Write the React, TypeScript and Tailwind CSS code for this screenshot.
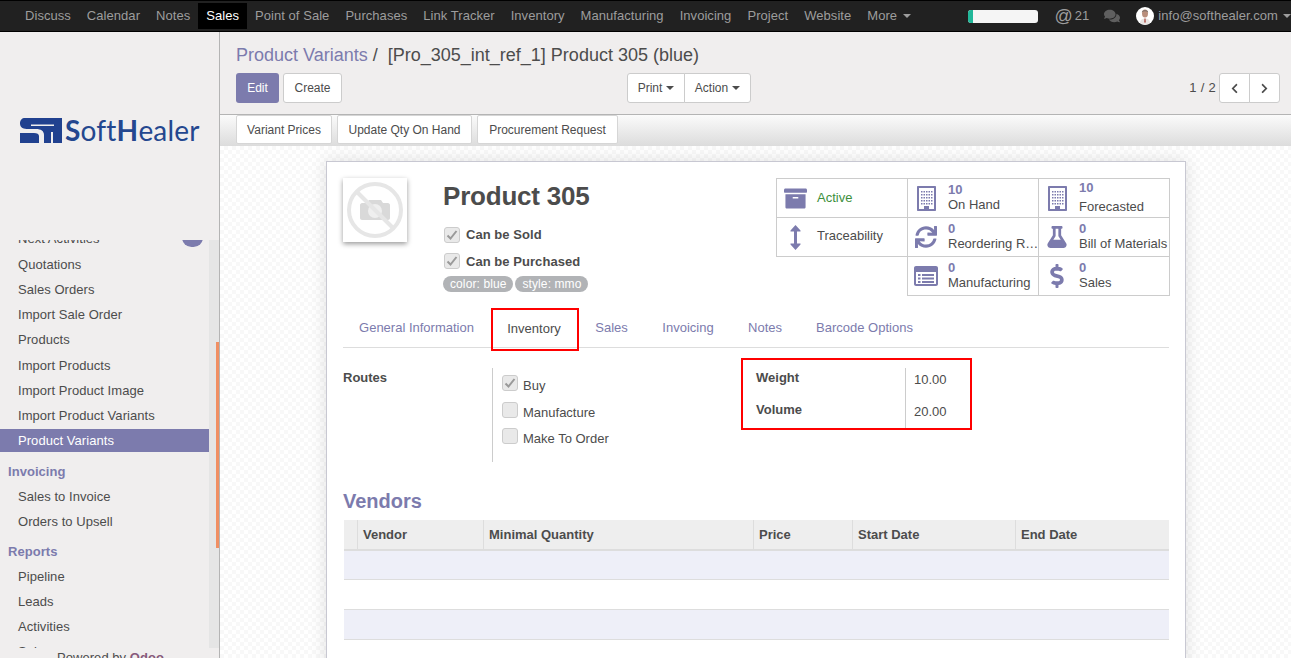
import { FaArchive, FaChevronLeft, FaChevronRight, FaComments, FaDollarSign, FaFlask, FaSync } from "react-icons/fa";
import type { ReactNode } from "react";

const navItems = ["Discuss", "Calendar", "Notes", "Sales", "Point of Sale", "Purchases", "Link Tracker", "Inventory", "Manufacturing", "Invoicing", "Project", "Website"];

function Caret({ className = "" }: { className?: string }) {
  return <span className={`inline-block h-0 w-0 border-x-[4px] border-t-[4px] border-x-transparent border-t-current ${className}`} />;
}

function Navbar() {
  return (
    <header className="flex h-8 shrink-0 items-stretch border-y border-black bg-[#212121] pl-[17px] text-[13px] tracking-[0.05px] text-[#9d9d9d]">
      {navItems.map((item) => (
        <a key={item} className={`flex h-[26px] items-center self-center px-2 ${item === "Sales" ? "bg-black text-white" : ""}`}>
          {item}
        </a>
      ))}
      <a className="flex items-center gap-[6px] px-2">
        More <Caret />
      </a>
      <div className="ml-auto flex items-center">
        <div className="mr-[16px] h-[13px] w-[70px] overflow-hidden rounded-[3px] bg-[#f5f5f5]">
          <div className="h-full w-[5px] bg-[#21b799]" />
        </div>
        <span className="mr-[15px] flex items-center gap-[2px] text-[13px]">
          <span className="text-[18px] leading-none">@</span> 21
        </span>
        <FaComments className="mr-4 text-[16px] text-[#5f5f5f]" />
        <Avatar />
        <span className="ml-[4px]">info@softhealer.com</span>
        <Caret className="ml-[5px]" />
      </div>
    </header>
  );
}

function Avatar() {
  return (
    <svg width="18" height="18" viewBox="0 0 18 18">
      <circle cx="9" cy="9" r="9" fill="#fff" />
      <ellipse cx="9" cy="6.500" rx="3" ry="4" fill="#b98f7c" />
      <path d="M5.800 5.500C5.800 2.500 12.200 2.500 12.200 5.500 11 3.800 7 3.800 5.800 5.500Z" fill="#6e6a66" />
      <path d="M4 16c.3-3.500 2.500-4.500 5-4.500s4.700 1 5 4.500a9 9 0 0 1-10 0Z" fill="#e8e4e2" />
      <path d="M8.500 11.500h1l.3 4h-1.600Z" fill="#a9473f" />
    </svg>
  );
}

function Logo() {
  return (
    <div className="flex h-[208px] shrink-0 items-start pl-5 pt-[85px]">
      <div className="flex items-center font-['Lato',sans-serif] text-[28px] leading-[26px] tracking-[0.2px] text-[#24478f]">
        <svg width="42" height="25" viewBox="0 0 42 25" className="mr-[3px]">
          <path d="M5 0H42V25H33V14H31V25H24V17C24 13 21 11 16 11H8C4 11 0 10 0 5.500 0 2 2 0 5 0Z" fill="#21418f" />
          <path d="M0 15H14C17 15 19 16 19 18V25H0Z" fill="#21418f" />
          <path d="M11 6.500H34V8H11Z" fill="#f0eeee" />
        </svg>
        <span className="font-bold">S</span>
        <span>of</span>
        <span>t</span>
        <span className="font-bold">H</span>
        <span>ealer</span>
      </div>
    </div>
  );
}

function MenuLink({ children, active = false, compact = false, className = "" }: { children: ReactNode; active?: boolean; compact?: boolean; className?: string }) {
  return (
    <a className={`block pl-[18px] ${compact ? "h-[23px] leading-[24px]" : "h-[25px] leading-[25px]"} ${active ? "bg-[#7c7bad] text-white" : ""} ${className}`}>
      {children}
    </a>
  );
}

function MenuHead({ children, className = "mt-[5px]" }: { children: ReactNode; className?: string }) {
  return <div className={`h-[25px] pl-2 font-bold leading-[25px] text-[#7c7bad] ${className}`}>{children}</div>;
}

function Sidebar() {
  return (
    <aside className="flex w-[220px] shrink-0 flex-col overflow-hidden border-r border-[#b4b4b4] bg-[#f0eeee] text-[13px] tracking-[0.05px] text-[#4c4c4c]">
      <Logo />
      <div className="relative h-[408px] shrink-0 overflow-hidden bg-[#e5e5e5]">
        <div className="mr-[10px] -mt-[13px] h-[421px] bg-[#f0eeee]">
          <div className="relative mb-[2px]">
            <MenuLink compact>Next Activities</MenuLink>
            <span className="absolute right-[6px] top-px h-[19px] w-[21px] rounded-full bg-[#7c7bad]" />
          </div>
          <MenuLink>Quotations</MenuLink>
          <MenuLink>Sales Orders</MenuLink>
          <MenuLink>Import Sale Order</MenuLink>
          <MenuLink className="mb-[1px]">Products</MenuLink>
          <MenuLink>Import Products</MenuLink>
          <MenuLink>Import Product Image</MenuLink>
          <MenuLink className="mb-[1px]">Import Product Variants</MenuLink>
          <MenuLink active compact>Product Variants</MenuLink>
          <MenuHead className="mt-[7px]">Invoicing</MenuHead>
          <MenuLink>Sales to Invoice</MenuLink>
          <MenuLink>Orders to Upsell</MenuLink>
          <MenuHead>Reports</MenuHead>
          <MenuLink>Pipeline</MenuLink>
          <MenuLink>Leads</MenuLink>
          <MenuLink>Activities</MenuLink>
          <MenuLink>Sales</MenuLink>
        </div>
        <span className="absolute right-0 top-[102px] h-[206px] w-[3px] bg-[#f08f63]" />
      </div>
      <div className="pl-[57px] pt-[2px] leading-[15px]">
        Powered by <span className="font-bold text-[#875a7b]">Odoo</span>
      </div>
    </aside>
  );
}

function Btn({ children, className = "" }: { children: ReactNode; className?: string }) {
  return <button className={`flex h-[30px] items-center justify-center border border-[#cccccc] bg-white text-[12px] text-[#4c4c4c] ${className}`}>{children}</button>;
}

function ControlPanel() {
  return (
    <div className="h-[82px] shrink-0 bg-[#f0eeee] pl-4 pr-[11px]">
      <div className="flex h-[41px] items-center pt-[5px] text-[18px] text-[#4c4c4c]">
        <span className="text-[#7c7bad]">Product Variants</span>
        <span className="ml-[5px] mr-[10px]">/</span>
        <span>[Pro_305_int_ref_1] Product 305 (blue)</span>
      </div>
      <div className="flex items-start">
        <button className="flex h-[30px] w-[43px] items-center justify-center rounded-[3px] bg-[#7c7bad] text-[12px] text-white">Edit</button>
        <Btn className="ml-[4px] w-[59px] rounded-[3px]">Create</Btn>
        <div className="ml-[285px] flex">
          <Btn className="w-[58px] gap-1 rounded-l-[3px]">Print <Caret /></Btn>
          <Btn className="-ml-px w-[67px] gap-1 rounded-r-[3px]">Action <Caret /></Btn>
        </div>
        <div className="ml-auto flex items-center text-[13px] tracking-[0.3px] text-[#4c4c4c]">
          <span className="mr-[3px]">1 / 2</span>
          <Btn className="w-[31px] rounded-l-[3px]"><FaChevronLeft className="text-[11px]" /></Btn>
          <Btn className="-ml-px w-[31px] rounded-r-[3px]"><FaChevronRight className="text-[11px]" /></Btn>
        </div>
      </div>
    </div>
  );
}

function StatusBar() {
  return (
    <div className="flex h-[32px] shrink-0 items-start gap-[5px] border-t border-[#b4b4b4] bg-gradient-to-b from-[#fbfbfb] to-[#dcdcdc] pl-4">
      {[
        ["Variant Prices", "w-[96px]"],
        ["Update Qty On Hand", "w-[135px]"],
        ["Procurement Request", "w-[141px]"],
      ].map(([label, width]) => (
        <button key={label} className={`h-[29px] rounded-[2px] border border-[#d6d6d6] bg-white text-[12px] text-[#4c4c4c] ${width}`}>{label}</button>
      ))}
    </div>
  );
}

function Check({ on = false }: { on?: boolean }) {
  return (
    <span className="flex h-4 w-4 shrink-0 items-center justify-center rounded-[3px] border border-[#cccccc] bg-[#e9e9e9]">
      {on && (
        <svg width="12" height="12" viewBox="0 0 12 12">
          <path d="M1.500 6.500 4.500 9.500 10.500 2" fill="none" stroke="#9a9a9a" strokeWidth="2" />
        </svg>
      )}
    </span>
  );
}

function Placeholder() {
  return (
    <div className="h-[64px] w-[64px] bg-white shadow-[0_2px_5px_rgba(0,0,0,0.4)]">
      <svg width="64" height="64" viewBox="0 0 64 64">
        <path d="M19 25h5l2-3h12l2 3h5c1 0 2 1 2 2v13c0 1-1 2-2 2H19c-1 0-2-1-2-2V27c0-1 1-2 2-2Z" fill="#d9d9d9" />
        <circle cx="32" cy="33" r="7" fill="#efefef" />
        <circle cx="32" cy="32" r="26" fill="none" stroke="#e6e6e6" strokeWidth="4" />
        <path d="M14 14 50 50" stroke="#e6e6e6" strokeWidth="4" />
      </svg>
    </div>
  );
}

function BuildingIcon() {
  const rows = [5, 8, 11, 14, 17];
  const cols = [4, 6.500, 9, 11.500, 14];
  return (
    <svg width="19" height="25" viewBox="0 0 19 25" fill="#7c7bad">
      <path fillRule="evenodd" d="M1 0H18C18.600 0 19 .4 19 1V24C19 24.600 18.600 25 18 25H1C.4 25 0 24.600 0 24V1C0 .4.4 0 1 0ZM2 2V23H7V20H12V23H17V2Z" />
      {rows.map((y) => cols.map((x) => <rect key={`${x}-${y}`} x={x} y={y} width="1.500" height="1.500" />))}
    </svg>
  );
}

function ListIcon() {
  const rows = [8, 11.500, 15];
  return (
    <svg width="24" height="20" viewBox="0 0 24 20" fill="#7c7bad">
      <path fillRule="evenodd" d="M2 0H22C23.100 0 24 .9 24 2V18C24 19.100 23.100 20 22 20H2C.9 20 0 19.100 0 18V2C0 .9.9 0 2 0ZM2 6V18H22V6Z" />
      {rows.map((y) => (
        <g key={y}>
          <rect x="4" y={y} width="2.500" height="2" />
          <rect x="8" y={y} width="12" height="2" />
        </g>
      ))}
    </svg>
  );
}

function ArrowsIcon() {
  return (
    <svg width="11" height="25" viewBox="0 0 11 25" fill="#7c7bad">
      <path d="M5.500 0 10.500 5.500V6.500H7V18.500H10.500V19.500L5.500 25 .5 19.500V18.500H4V6.500H.5V5.500Z" />
    </svg>
  );
}

function Stat({ icon, value, label, wide = false }: { icon: ReactNode; value: string; label: string; wide?: boolean }) {
  return (
    <div className="flex h-[38px] min-w-0 items-center pb-[3px]">
      <div className="flex w-[40px] shrink-0 justify-center pr-1 pt-[3px] text-[#7c7bad]">{icon}</div>
      <div className="-mr-[3px] min-w-0 flex-1 whitespace-nowrap leading-[15px]">
        <div className={`h-[15px] text-[13px] font-bold leading-[15px] text-[#7c7bad] ${wide ? "mb-[4px]" : ""}`}>{value}</div>
        <div className="overflow-hidden text-ellipsis">{label}</div>
      </div>
    </div>
  );
}

function StatGrid() {
  const cell = "border-r border-b border-[#cccccc]";
  return (
    <div className="grid w-[394px] shrink-0 grid-cols-[132px_131px_131px] border-t border-[#cccccc] text-[13px] text-[#4c4c4c]">
      <div className={`${cell} border-l`}>
        <div className="flex h-[38px] items-center">
          <div className="flex w-[37px] justify-center"><FaArchive className="text-[23px] text-[#7c7bad]" /></div>
          <span className="ml-[3px] text-[#3d8f3d]">Active</span>
        </div>
      </div>
      <div className={cell}><Stat icon={<BuildingIcon />} value="10" label="On Hand" /></div>
      <div className={cell}><Stat icon={<BuildingIcon />} value="10" label="Forecasted" wide /></div>
      <div className={`${cell} border-l`}>
        <div className="flex h-[38px] items-center">
          <div className="flex w-[37px] justify-center"><ArrowsIcon /></div>
          <span className="ml-[3px] pb-[2px]">Traceability</span>
        </div>
      </div>
      <div className={cell}><Stat icon={<FaSync className="text-[22px]" />} value="0" label="Reordering Rules" /></div>
      <div className={cell}><Stat icon={<FaFlask className="text-[22px]" />} value="0" label="Bill of Materials" /></div>
      <div className="border-r border-[#cccccc]" />
      <div className={cell}><Stat icon={<ListIcon />} value="0" label="Manufacturing" /></div>
      <div className={cell}><Stat icon={<FaDollarSign className="text-[24px]" />} value="0" label="Sales" /></div>
    </div>
  );
}

function Tabs() {
  const tabs = [
    ["General Information", "w-[148px] pr-px"],
    ["Inventory", "w-[88px] pr-[2px]"],
    ["Sales", "w-[65px]"],
    ["Invoicing", "w-[88px]"],
    ["Notes", "w-[66px]"],
    ["Barcode Options", "w-[132px] pl-px"],
  ];
  return (
    <div className="mt-[12px] flex h-[40px] border-b border-[#dddddd] text-[13px] text-[#7c7bad]">
      {tabs.map(([tab, width]) =>
        tab === "Inventory" ? (
          <a key={tab} className={`-mb-[3px] flex h-[43px] items-center justify-center border-2 border-[#ff0000] pb-[1px] text-[#4c4c4c] ${width}`}>{tab}</a>
        ) : (
          <a key={tab} className={`flex items-center justify-center ${width}`}>{tab}</a>
        ),
      )}
    </div>
  );
}

function InventoryTab() {
  const routes: [string, boolean][] = [["Buy", true], ["Manufacture", false], ["Make To Order", false]];
  return (
    <div className="mt-[10px] flex items-start text-[13px] text-[#4c4c4c]">
      <div className="mt-[10px] w-[149px] font-bold">Routes</div>
      <div className="mt-[10px] flex h-[94px] w-[249px] flex-col gap-[8.5px] border-l border-[#cccccc] pl-[9px] pt-[7px]">
        {routes.map(([label, on]) => (
          <label key={label} className="flex h-[18px] items-start gap-[5px] leading-[22px]">
            <Check on={on} /> <span>{label}</span>
          </label>
        ))}
      </div>
      <div className="flex h-[72px] w-[231px] border-2 border-[#ff0000] pt-[8px]">
        <div className="w-[162px] pl-[13px] font-bold">
          <div className="h-[32px]">Weight</div>
          <div>Volume</div>
        </div>
        <div className="h-[60px] border-l border-[#cccccc] pl-2 leading-[24px]">
          <div className="h-[32px]">10.00</div>
          <div>20.00</div>
        </div>
      </div>
    </div>
  );
}

function VendorTable() {
  const cols = [
    ["", "w-[14px]"],
    ["Vendor", "w-[126px]"],
    ["Minimal Quantity", "w-[270px]"],
    ["Price", "w-[99px]"],
    ["Start Date", "w-[163px]"],
    ["End Date", "flex-1"],
  ];
  return (
    <div className="pl-px text-[13px] text-[#4c4c4c]">
      <div className="flex h-[31px] border-b-2 border-[#dddddd] bg-[#eeeeee] font-bold">
        {cols.map(([name, width], i) => (
          <div key={i} className={`flex items-center pl-[5px] ${i < 5 ? "border-r border-[#dddddd]" : ""} ${width}`}>{name}</div>
        ))}
      </div>
      <div className="h-[29px] border-b border-[#dddddd] bg-[#eeeff8]" />
      <div className="h-[30px] border-b border-[#dddddd]" />
      <div className="h-[30px] border-b border-[#dddddd] bg-[#eeeff8]" />
    </div>
  );
}

function Sheet() {
  return (
    <div className="min-h-0 flex-1 overflow-hidden bg-[repeating-conic-gradient(#f8f8f8_0_25%,#ffffff_0_50%)] bg-[length:8px_8px] pt-[15px]">
      <div className="ml-[106px] h-[600px] w-[860px] border border-[#c8c8d2] bg-white px-4 pt-4 shadow-[0_0_16px_rgba(0,0,0,0.12)]">
        <div className="flex w-[827px]">
          <Placeholder />
          <div className="ml-9 w-[333px] shrink-0">
            <h1 className="mt-[2px] text-[26px] font-bold leading-[32px] tracking-[-0.2px] text-[#4c4c4c]">Product 305</h1>
            <div className="ml-[1px] mt-[13px] flex items-center gap-[6px] text-[13px] font-bold tracking-[0.05px] text-[#4c4c4c]"><Check on /> Can be Sold</div>
            <div className="ml-[1px] mt-[7px] flex items-center gap-[6px] text-[13px] font-bold tracking-[0.05px] text-[#4c4c4c]"><Check on /> Can be Purchased</div>
            <div className="mt-[5px] flex gap-[2px] text-[12px] leading-[16px] text-white">
              <span className="rounded-full bg-[#b1b3b6] px-[7px] tracking-[0.1px]">color: blue</span>
              <span className="rounded-full bg-[#b1b3b6] px-[7px] tracking-[0.1px]">style: mmo</span>
            </div>
          </div>
          <StatGrid />
        </div>
        <Tabs />
        <InventoryTab />
        <h2 className="mt-[27px] h-[31px] text-[20px] font-bold leading-[24px] text-[#7c7bad]">Vendors</h2>
        <VendorTable />
      </div>
    </div>
  );
}

export default function App() {
  return (
    <div className="flex h-[658px] w-[1291px] flex-col overflow-hidden bg-white font-['Liberation_Sans',Arial,sans-serif]">
      <Navbar />
      <div className="flex min-h-0 flex-1">
        <Sidebar />
        <main className="flex min-w-0 flex-1 flex-col">
          <ControlPanel />
          <StatusBar />
          <Sheet />
        </main>
      </div>
    </div>
  );
}
